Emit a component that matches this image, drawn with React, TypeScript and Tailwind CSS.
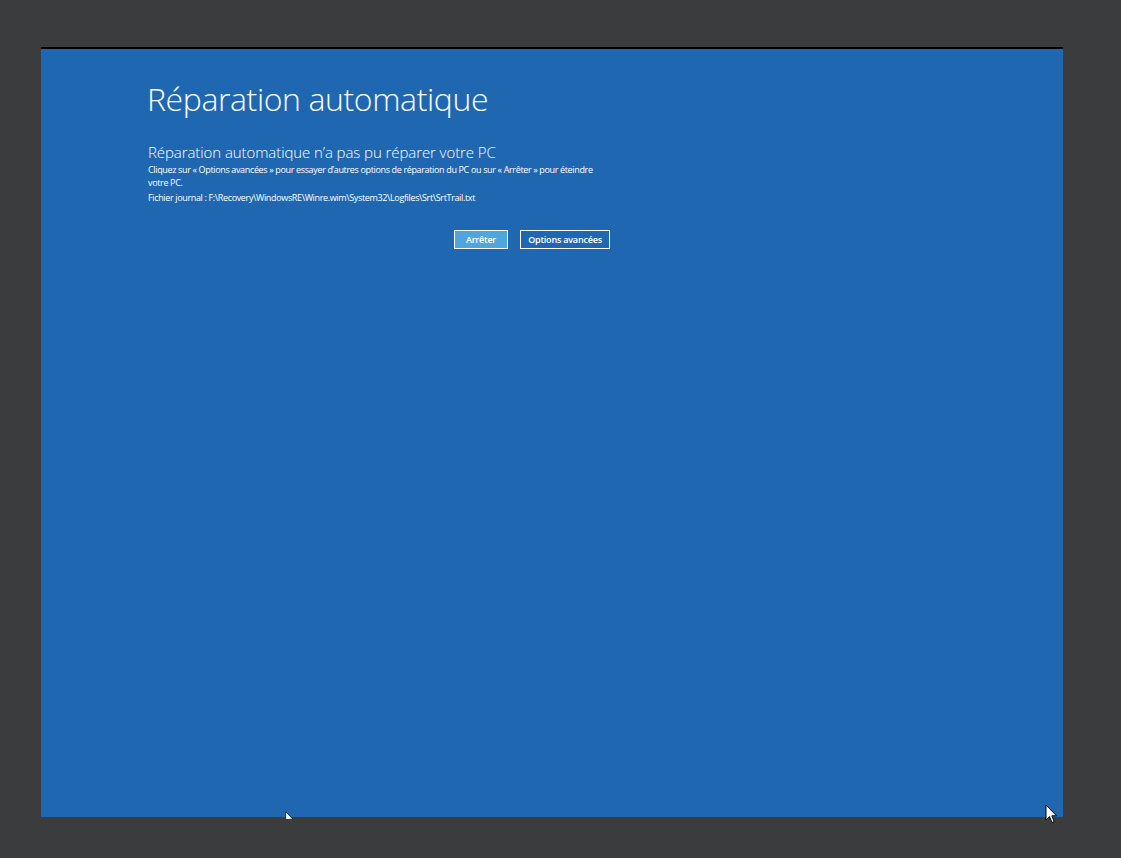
import React from "react";

function Cursor({ className }: { className: string }) {
  return (
    <svg className={className} width="13" height="20" viewBox="0 0 13 20">
      <path d="M1 1 L1 16 L4.5 12.5 L7 18.5 L9.2 17.6 L6.8 11.8 L11.5 11.8 Z" fill="#fff" stroke="#000" strokeWidth="1" />
    </svg>
  );
}

export default function App() {
  return (
    <div className="relative h-[858px] w-[1121px] overflow-hidden bg-[#3b3c3e] pl-[41px] pt-[47px] font-['Open_Sans',sans-serif]">
      <div className="h-[770px] w-[1022px] border-t-2 border-black bg-[#2067b2] pl-[106px] pt-[28px] text-white">
        <h1 className="text-[32px] font-light leading-[44px] tracking-[-0.4px]">Réparation automatique</h1>
        <div className="mt-[22px] w-[464px] pl-[1px]">
          <h2 className="text-[15px] font-light leading-[19px] tracking-[-0.08px]">Réparation automatique n’a pas pu réparer votre PC</h2>
          <p className="mt-[1px] text-[9px] leading-[13px] tracking-[-0.35px]">
            Cliquez sur « Options avancées » pour essayer d’autres options de réparation du PC ou sur « Arrêter » pour éteindre votre PC.
          </p>
          <p className="mt-[2px] text-[9px] leading-[13px] tracking-[-0.35px]">
            Fichier journal : F:\Recovery\WindowsRE\Winre.wim\System32\Logfiles\Srt\SrtTrail.txt
          </p>
          <div className="mt-[26px] flex justify-end gap-[12px] pr-[1px]">
            <button className="h-[19px] w-[54px] border border-white bg-[#4ea6dc] text-[9px] font-semibold leading-none tracking-[-0.2px]">Arrêter</button>
            <button className="h-[19px] w-[90px] border border-white bg-transparent text-[9px] font-semibold leading-none tracking-[-0.2px]">Options avancées</button>
          </div>
        </div>
      </div>
      <div className="absolute left-[285px] top-[811px] h-[8px] w-[13px] overflow-hidden">
        <Cursor className="h-[14px] w-[9px]" />
      </div>
      <Cursor className="absolute left-[1045px] top-[804px]" />
    </div>
  );
}
